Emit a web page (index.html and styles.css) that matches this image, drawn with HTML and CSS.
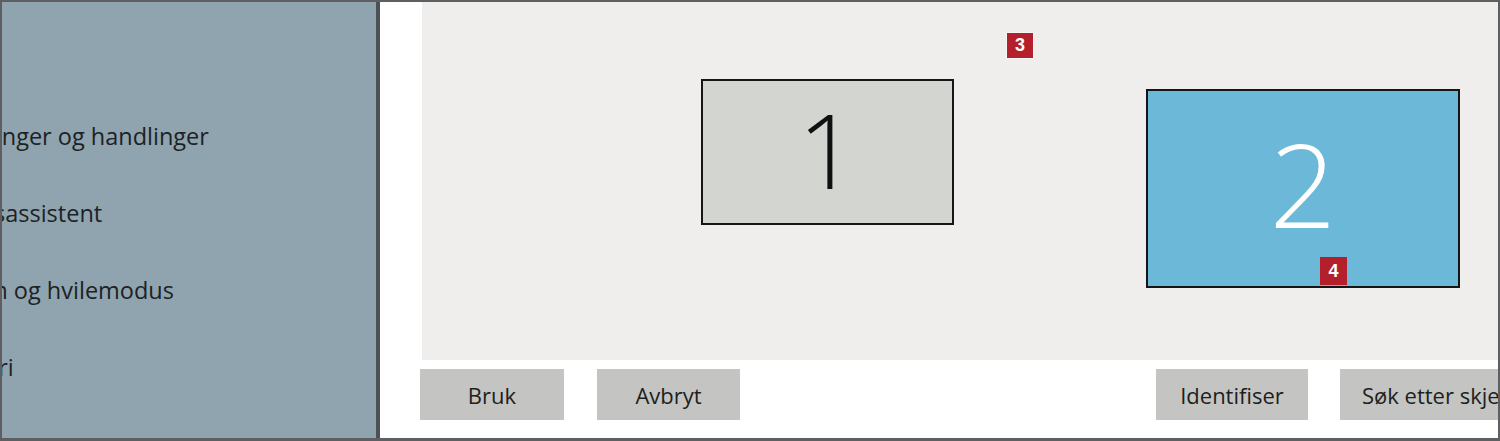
FILE: index.html
```html
<!DOCTYPE html>
<html lang="no">
<head>
<meta charset="utf-8">
<title>Skjerm</title>
<link rel="stylesheet" href="styles.css">
</head>
<body>
<div class="frame">
  <nav class="sidebar">
    <div class="nav-item item-a">Varslinger og handlinger</div>
    <div class="nav-item item-b">Fokusassistent</div>
    <div class="nav-item item-c">Strøm og hvilemodus</div>
    <div class="nav-item item-d">Batteri</div>
  </nav>
  <main class="main">
    <div class="canvas">
      <div class="monitor monitor-1"><span class="digit">1</span></div>
      <div class="monitor monitor-2"><span class="digit">2</span></div>
      <span class="badge badge-3">3</span>
      <span class="badge badge-4">4</span>
    </div>
    <div class="buttons">
      <button class="btn btn-bruk">Bruk</button>
      <button class="btn btn-avbryt">Avbryt</button>
      <button class="btn btn-ident">Identifiser</button>
      <button class="btn btn-sok">Søk etter skjermer</button>
    </div>
  </main>
</div>
</body>
</html>
```
FILE: styles.css
```css
html, body {
  margin: 0;
  padding: 0;
}
body {
  width: 1500px;
  height: 441px;
  overflow: hidden;
  font-family: "Open Sans", "Noto Sans", sans-serif;
  background: #ffffff;
}
.frame {
  box-sizing: border-box;
  width: 1500px;
  height: 441px;
  border: 2px solid #5d5f60;
  border-bottom-width: 3px;
  display: flex;
  overflow: hidden;
}
.sidebar {
  width: 374px;
  flex: none;
  background: #8fa4ae;
  border-right: 4px solid #4c5154;
  overflow: hidden;
  display: flex;
  flex-direction: column;
  padding-top: 119px;
}
.nav-item {
  height: 77px;
  line-height: 30px;
  font-size: 23.5px;
  color: #1c2225;
  white-space: nowrap;
}
.item-a { margin-left: -60px; }
.item-b { margin-left: -61px; }
.item-c { margin-left: -61px; }
.item-d { margin-left: -62px; }

.main {
  flex: 1;
  min-width: 0;
  display: flex;
  flex-direction: column;
  background: #ffffff;
  overflow: hidden;
}
.canvas {
  position: relative;
  height: 358px;
  margin-left: 42px;
  background: #efeeec;
  flex: none;
}
.monitor {
  position: absolute;
  box-sizing: border-box;
  border: 2px solid #151515;
  display: flex;
  align-items: center;
  justify-content: center;
}
.monitor-1 {
  left: 279px;
  top: 77px;
  width: 253px;
  height: 146px;
  background: #d3d5d1;
  color: #101010;
}
.monitor-2 {
  left: 724px;
  top: 87px;
  width: 314px;
  height: 199px;
  background: #6bb8d9;
  color: #ffffff;
}
.digit {
  font-weight: 300;
  line-height: 1;
}
.monitor-1 .digit { font-size: 104px; margin-top: -6px; }
.monitor-2 .digit { font-size: 117px; margin-top: -13px; }

.badge {
  position: absolute;
  display: flex;
  align-items: center;
  justify-content: center;
  background: #b31f2a;
  color: #ffffff;
  font-family: "Liberation Sans", Arial, sans-serif;
  font-weight: 700;
  font-size: 18px;
  box-shadow: 0 0 0 1px #f6f6f6;
}
.badge-3 {
  left: 585px;
  top: 31px;
  width: 26px;
  height: 25px;
}
.badge-4 {
  left: 898px;
  top: 255px;
  width: 27px;
  height: 28px;
  box-shadow: none;
}

.buttons {
  display: flex;
  margin-top: 9px;
  padding-left: 40px;
}
.btn {
  flex: none;
  height: 51px;
  border: none;
  padding: 0;
  background: #c4c5c2;
  color: #1e1e1e;
  font-family: "Open Sans", "Noto Sans", sans-serif;
  font-size: 22px;
  white-space: nowrap;
  overflow: hidden;
}
.btn-bruk { width: 144px; }
.btn-avbryt { width: 143px; margin-left: 33px; }
.btn-ident { width: 152px; margin-left: 416px; }
.btn-sok {
  width: 240px;
  margin-left: 32px;
  text-align: left;
  padding-left: 22px;
}
```
